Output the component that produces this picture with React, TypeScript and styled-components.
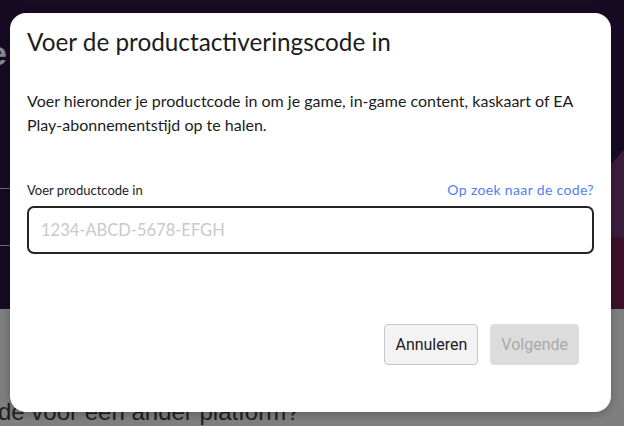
import React from "react";
import styled, { createGlobalStyle } from "styled-components";

const GlobalStyle = createGlobalStyle`
  * { box-sizing: border-box; }
  html, body { margin: 0; padding: 0; }
  body { width: 624px; height: 426px; overflow: hidden; font-family: "Lato", "Liberation Sans", sans-serif; }
`;

const Page = styled.div`
  position: relative;
  width: 624px;
  height: 426px;
  overflow: hidden;
  display: flex;
  flex-direction: column;
`;

const Hero = styled.div`
  position: relative;
  height: 311px;
  background: #170b23;
  padding-top: 36px;
  overflow: hidden;

  &::before {
    content: "";
    position: absolute;
    right: 0;
    top: 150px;
    width: 60px;
    height: 161px;
    background: #3a1c3c;
    clip-path: polygon(100% 0, 100% 100%, 0 100%, 0 40%);
  }
  &::after {
    content: "";
    position: absolute;
    right: 0;
    top: 230px;
    width: 60px;
    height: 81px;
    background: #3d1129;
    clip-path: polygon(100% 10%, 100% 100%, 0 100%, 0 0);
  }
`;

const HeroTitle = styled.div`
  font-family: "Liberation Sans", Arial, sans-serif;
  font-weight: 700;
  font-size: 34px;
  color: #8a8790;
  margin-left: -12px;
  line-height: 34px;
`;

const HeroText = styled.div`
  font-family: "Liberation Sans", Arial, sans-serif;
  font-size: 16px;
  color: #8a8790;
  margin-left: -9px;
  line-height: 27px;
  margin-top: 44px;
`;

const HeroRule = styled.div<{ $gap: number }>`
  height: 1px;
  width: 40px;
  background: #6e6a76;
  margin-top: ${(p) => p.$gap}px;
`;

const Lower = styled.div`
  flex: 1;
  background: #7f7f7f;
  padding-top: 89px;
`;

const LowerText = styled.div`
  font-family: "Liberation Sans", Arial, sans-serif;
  font-size: 24px;
  color: #1e1e1e;
  margin-left: -2px;
  line-height: 28px;
`;

const Modal = styled.div`
  position: absolute;
  left: 10px;
  top: 13px;
  width: 601px;
  height: 399px;
  background: #ffffff;
  border-radius: 16px;
  box-shadow: 0 2px 8px rgba(0, 0, 0, 0.25);
  padding: 14px 17px 0 17px;
  display: flex;
  flex-direction: column;
  color: #1c1c1c;
`;

const Title = styled.h2`
  margin: 0;
  font-weight: 400;
  font-size: 24.3px;
  line-height: 30px;
`;

const Body = styled.p`
  margin: 32px 0 0 0;
  font-size: 16px;
  line-height: 24px;
  padding-right: 4px;
`;

const LabelRow = styled.div`
  margin-top: 44px;
  display: flex;
  justify-content: space-between;
  align-items: baseline;
  font-size: 13px;
  line-height: 18px;
`;

const Label = styled.label`
  color: #1c1c1c;
`;

const HelpLink = styled.a`
  color: #4f7ef5;
  text-decoration: none;
  font-size: 14px;
  letter-spacing: 0.35px;
`;

const CodeInput = styled.input`
  margin-top: 7px;
  width: 100%;
  height: 48px;
  border: 2px solid #242424;
  border-radius: 7px;
  padding: 0 12px;
  font-family: "Lato", "Liberation Sans", sans-serif;
  font-size: 16.5px;
  outline: none;
  &::placeholder { color: #c9c9c9; }
`;

const Actions = styled.div`
  margin-top: 70px;
  display: flex;
  justify-content: flex-end;
  gap: 12px;
  padding-right: 15px;
`;

const Button = styled.button<{ $disabled?: boolean }>`
  height: 41px;
  padding: 0 10px;
  font-family: "Roboto", "Liberation Sans", sans-serif;
  font-size: 16px;
  border-radius: 4px;
  border: 1px solid ${(p) => (p.$disabled ? "#dcdcdc" : "#c6c6d0")};
  background: ${(p) => (p.$disabled ? "#dcdcdc" : "#f3f3f4")};
  color: ${(p) => (p.$disabled ? "#a9a9a9" : "#1c1c1c")};
`;

export default function App() {
  return (
    <>
      <GlobalStyle />
      <Page>
        <Hero>
          <HeroTitle>e</HeroTitle>
          <HeroText>
            n
            <br />e
          </HeroText>
          <HeroRule $gap={20} />
          <HeroRule $gap={56} />
        </Hero>
        <Lower>
          <LowerText>de voor een ander platform?</LowerText>
        </Lower>
        <Modal>
          <Title>Voer de productactiveringscode in</Title>
          <Body>
            Voer hieronder je productcode in om je game, in-game content, kaskaart of EA
            Play-abonnementstijd op te halen.
          </Body>
          <LabelRow>
            <Label>Voer productcode in</Label>
            <HelpLink href="#">Op zoek naar de code?</HelpLink>
          </LabelRow>
          <CodeInput placeholder="1234-ABCD-5678-EFGH" />
          <Actions>
            <Button>Annuleren</Button>
            <Button $disabled>Volgende</Button>
          </Actions>
        </Modal>
      </Page>
    </>
  );
}
